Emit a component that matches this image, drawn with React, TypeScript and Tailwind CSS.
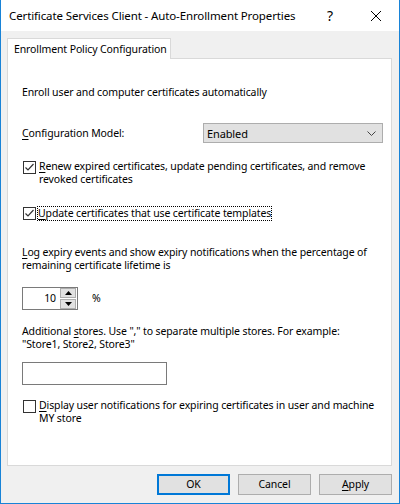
import React from 'react';

const font = "font-['Segoe_UI','Noto_Sans',sans-serif]";

// access-key letter, drawn underlined like a Win32 dialog
const Key = ({ children }: { children: React.ReactNode }) => <span className="underline underline-offset-2">{children}</span>;

const Check = ({ checked }: { checked?: boolean }) => (
    <div className="w-[13px] h-[13px] border border-[#333] bg-white shrink-0 flex items-center justify-center">
        {checked && (
            <svg width="11" height="11" viewBox="0 0 11 11">
                <path d="M1.5 5.5 L4 8 L9.5 2" fill="none" stroke="#333" strokeWidth="1.2" />
            </svg>
        )}
    </div>
);

const Button = ({ children, primary }: { children: React.ReactNode; primary?: boolean }) => (
    <div
        className={`w-[73px] h-[21px] bg-[#e1e1e1] flex items-center justify-center ${
            primary ? 'border-2 border-[#0078d7]' : 'border border-[#adadad]'
        }`}
    >
        {children}
    </div>
);

export default function App() {
    return (
        <div className={`w-[400px] h-[504px] bg-[#f0f0f0] border-x border-b border-[#1883d7] flex flex-col text-black ${font}`}>
            {/* title bar */}
            <div className="h-[31px] bg-white flex items-center pl-[8px] text-[11.5px] tracking-[-0.12px] shrink-0 whitespace-nowrap">
                <span className="flex-1">Certificate Services Client - Auto-Enrollment Properties</span>
                <span className="text-[14px] w-[46px] text-center">?</span>
                <div className="w-[46px] flex justify-center">
                    <svg width="10" height="10" viewBox="0 0 10 10">
                        <path d="M0 0 L10 10 M10 0 L0 10" stroke="#000" strokeWidth="1" />
                    </svg>
                </div>
            </div>

            <div className="pl-[6px] pt-[7px] text-[10.5px] tracking-[-0.12px] leading-[13px] whitespace-nowrap">
                {/* tab strip */}
                <div className="relative z-10 -mb-px w-[164px] h-[21px] bg-white border border-b-0 border-[#d9d9d9] flex items-center pl-[6px]">
                    Enrollment Policy Configuration
                </div>

                {/* tab page */}
                <div className="w-[385px] h-[408px] bg-white border border-[#d9d9d9] pl-[14px] flex flex-col">
                    <p className="mt-[27px]">Enroll user and computer certificates automatically</p>

                    <div className="mt-[24px] flex items-center h-[20px]">
                        <span className="w-[181px]">
                            <Key>C</Key>onfiguration Model:
                        </span>
                        <div className="w-[180px] h-[20px] bg-[#e1e1e1] border border-[#adadad] flex items-center pl-[3px] pr-[6px] text-[11px]">
                            <span className="flex-1">Enabled</span>
                            <svg width="9" height="5" viewBox="0 0 9 5">
                                <path d="M0.5 0.5 L4.5 4.5 L8.5 0.5" fill="none" stroke="#444" strokeWidth="1" />
                            </svg>
                        </div>
                    </div>

                    <div className="mt-[17px] flex gap-[3px]">
                        <div className="mt-[1px] ml-[1px]">
                            <Check checked />
                        </div>
                        <span>
                            <Key>R</Key>enew expired certificates, update pending certificates, and remove
                            <br />
                            revoked certificates
                        </span>
                    </div>

                    <div className="mt-[21px] flex gap-[2px] items-center">
                        <div className="ml-[1px]">
                            <Check checked />
                        </div>
                        <span className="outline outline-1 outline-dotted outline-black">
                            <Key>U</Key>pdate certificates that use certificate templates
                        </span>
                    </div>

                    <p className="mt-[26px]">
                        <Key>L</Key>og expiry events and show expiry notifications when the percentage of
                        <br />
                        remaining certificate lifetime is
                    </p>

                    <div className="mt-[15px] flex items-center">
                        <div className="w-[56px] h-[23px] border border-[#7a7a7a] flex items-center bg-white">
                            <span className="flex-1 text-right pr-[4px]">10</span>
                            <div className="flex flex-col gap-px mr-px">
                                <div className="w-[16px] h-[10px] bg-[#e1e1e1] border border-[#adadad] flex items-center justify-center">
                                    <svg width="7" height="4" viewBox="0 0 7 4">
                                        <path d="M3.5 0 L7 4 L0 4 Z" fill="#000" />
                                    </svg>
                                </div>
                                <div className="w-[16px] h-[10px] bg-[#e1e1e1] border border-[#adadad] flex items-center justify-center">
                                    <svg width="7" height="4" viewBox="0 0 7 4">
                                        <path d="M0 0 L7 0 L3.5 4 Z" fill="#000" />
                                    </svg>
                                </div>
                            </div>
                        </div>
                        <span className="ml-[14px]">%</span>
                    </div>

                    <p className="mt-[15px]">
                        Additional <Key>s</Key>tores. Use "," to separate multiple stores. For example:
                        <br />
                        "Store1, Store2, Store3"
                    </p>

                    <div className="mt-[11px] w-[145px] h-[23px] border border-[#7a7a7a] bg-white" />

                    <div className="mt-[14px] flex gap-[3px]">
                        <div className="mt-[1px] ml-[1px]">
                            <Check />
                        </div>
                        <span>
                            <Key>D</Key>isplay user notifications for expiring certificates in user and machine
                            <br />
                            MY store
                        </span>
                    </div>
                </div>

                {/* dialog buttons */}
                <div className="flex justify-end gap-[8px] w-[385px] mt-[8px]">
                    <Button primary>OK</Button>
                    <Button>Cancel</Button>
                    <Button>
                        <Key>A</Key>pply
                    </Button>
                </div>
            </div>
        </div>
    );
}
